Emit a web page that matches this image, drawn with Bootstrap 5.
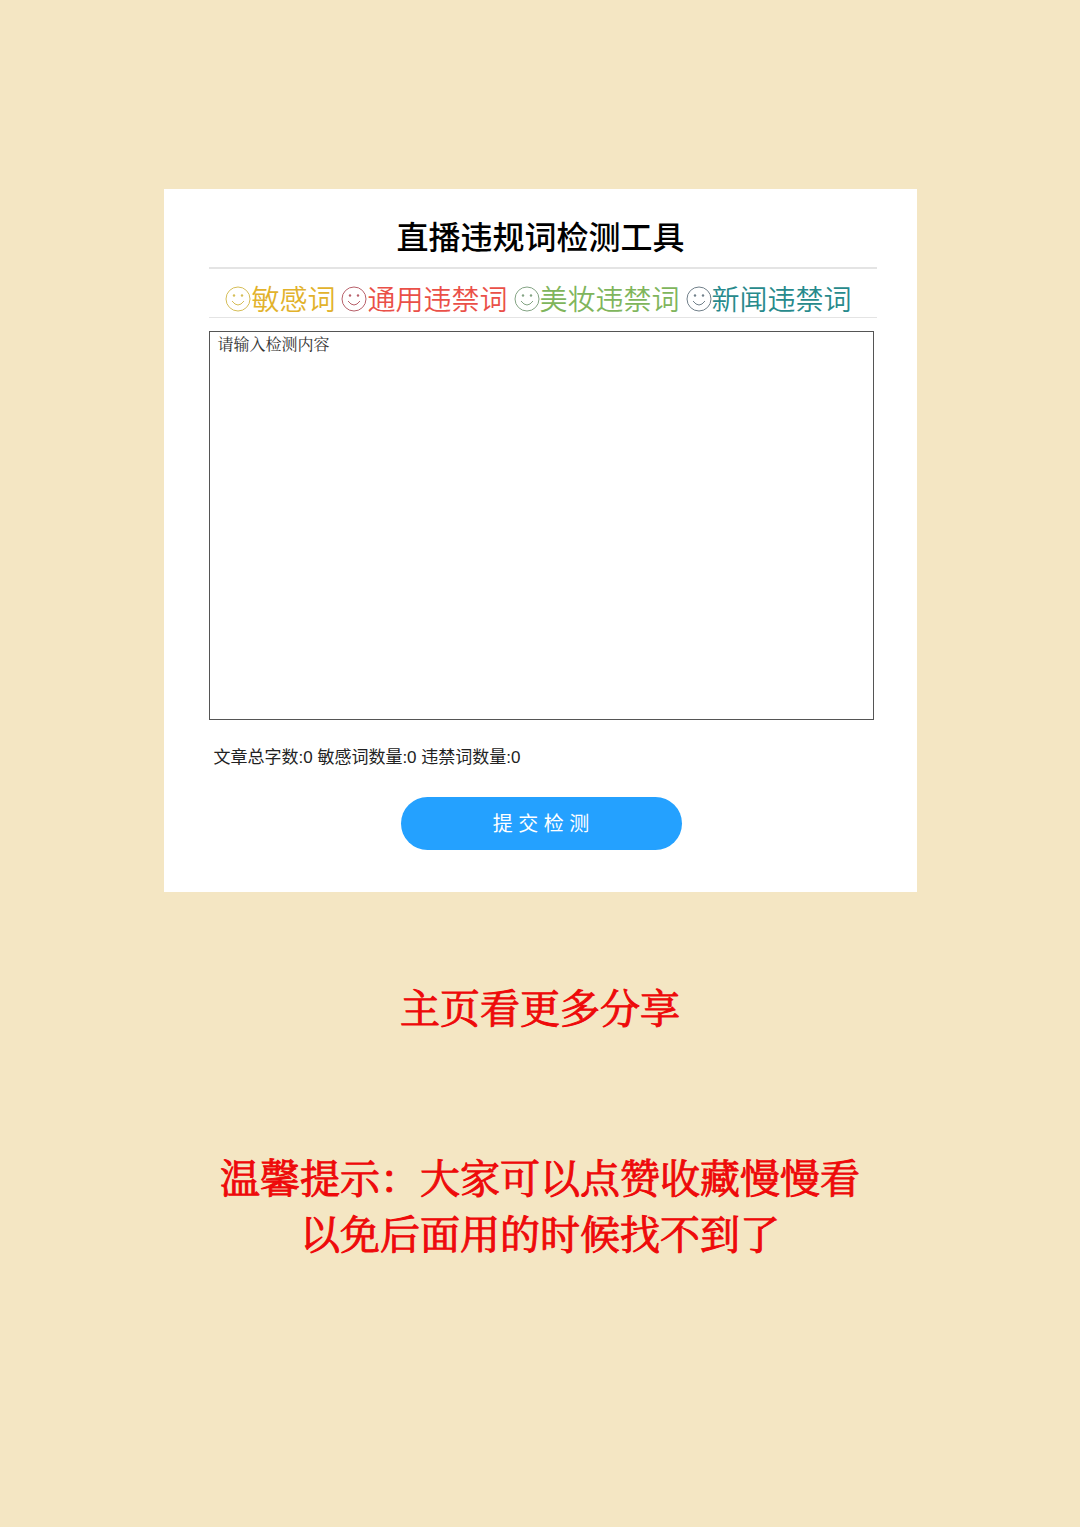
<!DOCTYPE html>
<html lang="zh-CN">
<head>
<meta charset="utf-8">
<meta name="viewport" content="width=device-width, initial-scale=1">
<title>直播违规词检测工具</title>
<link href="https://cdn.jsdelivr.net/npm/bootstrap@5.3.0/dist/css/bootstrap.min.css" rel="stylesheet">
<style>
body { background: #f4e6c3; font-family: "Liberation Sans", "Noto Sans CJK SC", sans-serif; color: #222; }
.tool-panel { max-width: 753px; margin-top: 189px; padding: 25px 40px 42px 45px; }
.tool-title { font-size: 32px; line-height: 48px; font-weight: 500; color: #000; padding: 0 4px 5px 0; border-bottom: 2px solid #e4e4e4; }
.kinds { padding: 16px 8px 0 0; gap: 6px; border-bottom: 1px solid #e4e4e4; margin-bottom: 13px; }
.kinds a { font-size: 28px; line-height: 32px; font-weight: 350; }
.kinds svg { width: 26px; height: 26px; margin-bottom: 4px; }
.kind-gold { color: #e2b22c; } .kind-gold svg { color: #d6be58; }
.kind-red { color: #ea5048; } .kind-red svg { color: #b8606a; }
.kind-green { color: #80b55c; } .kind-green svg { color: #84a484; }
.kind-teal { color: #278a8c; } .kind-teal svg { color: #71808a; }
.check-form { padding-right: 3px; }
.check-input { height: 389px; padding: 0 8px; border: 1px solid #555; font: 16px/23px "Noto Serif CJK SC", "Noto Sans CJK SC", serif; resize: none; }
.check-input::placeholder { color: #333; opacity: 1; }
.counts { font-size: 17px; line-height: 24px; padding: 26px 5px 27px; }
.btn-check-text { --bs-btn-bg: #24a1ff; --bs-btn-color: #fff; --bs-btn-hover-bg: #148fec; --bs-btn-hover-color: #fff; width: 281px; height: 53px; font-size: 20px; }
.share-note { font-family: "Noto Serif CJK SC", "Noto Sans CJK SC", serif; font-size: 40px; line-height: 56px; font-weight: 400; color: #ee0a0a; -webkit-text-stroke: 1px #ee0a0a; }
.share-more { margin: 86px 0 114px; }
</style>
</head>
<body>
<main class="container-fluid">
  <section class="tool-panel bg-white mx-auto">
    <h1 class="tool-title text-center mb-0">直播违规词检测工具</h1>
    <nav class="kinds d-flex flex-wrap justify-content-center">
      <a href="#" class="kind-gold d-flex align-items-center text-decoration-none"><svg viewBox="0 0 26 26" fill="none" stroke="currentColor" aria-hidden="true"><circle cx="13" cy="13" r="12"/><path d="M7 15Q13 23 19 15"/><g fill="currentColor" stroke="none"><circle cx="9" cy="9.500" r="1.200"/><circle cx="17" cy="9.500" r="1.200"/></g></svg>敏感词</a>
      <a href="#" class="kind-red d-flex align-items-center text-decoration-none"><svg viewBox="0 0 26 26" fill="none" stroke="currentColor" aria-hidden="true"><circle cx="13" cy="13" r="12"/><path d="M7 15Q13 23 19 15"/><g fill="currentColor" stroke="none"><circle cx="9" cy="9.500" r="1.200"/><circle cx="17" cy="9.500" r="1.200"/></g></svg>通用违禁词</a>
      <a href="#" class="kind-green d-flex align-items-center text-decoration-none"><svg viewBox="0 0 26 26" fill="none" stroke="currentColor" aria-hidden="true"><circle cx="13" cy="13" r="12"/><path d="M7 15Q13 23 19 15"/><g fill="currentColor" stroke="none"><circle cx="9" cy="9.500" r="1.200"/><circle cx="17" cy="9.500" r="1.200"/></g></svg>美妆违禁词</a>
      <a href="#" class="kind-teal d-flex align-items-center text-decoration-none"><svg viewBox="0 0 26 26" fill="none" stroke="currentColor" aria-hidden="true"><circle cx="13" cy="13" r="12"/><path d="M7 15Q13 23 19 15"/><g fill="currentColor" stroke="none"><circle cx="9" cy="9.500" r="1.200"/><circle cx="17" cy="9.500" r="1.200"/></g></svg>新闻违禁词</a>
    </nav>
    <form class="check-form">
      <textarea class="check-input d-block w-100" placeholder="请输入检测内容" aria-label="请输入检测内容"></textarea>
      <p class="counts mb-0">文章总字数:0 敏感词数量:0 违禁词数量:0</p>
      <button type="button" class="btn btn-check-text rounded-pill d-block mx-auto border-0">提 交 检 测</button>
    </form>
  </section>
  <section class="share-note text-center">
    <p class="share-more">主页看更多分享</p>
    <p class="mb-0">温馨提示：大家可以点赞收藏慢慢看<br>以免后面用的时候找不到了</p>
  </section>
</main>
<script src="https://cdn.jsdelivr.net/npm/bootstrap@5.3.0/dist/js/bootstrap.bundle.min.js"></script>
</body>
</html>
